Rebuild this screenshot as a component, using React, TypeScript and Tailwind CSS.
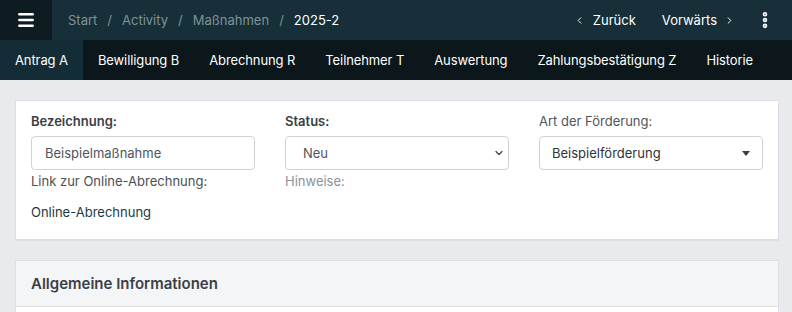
import React from 'react'
import { ChevronDown, ChevronLeft, ChevronRight, EllipsisVertical, Menu } from 'lucide-react'

const tabs = ['Antrag A', 'Bewilligung B', 'Abrechnung R', 'Teilnehmer T', 'Auswertung', 'Zahlungsbestätigung Z', 'Historie']
const crumbs = ['Start', 'Activity', 'Maßnahmen']

export default function App() {
  return (
    <div className="min-h-screen bg-[#e9eaee] font-['Inter',sans-serif] text-[13px] leading-[18px]">
      {/* top bar */}
      <div className="flex h-10 items-center bg-[#162f38] text-white">
        <button className="flex h-10 w-[52px] items-center justify-center bg-[#0e1c21]">
          <Menu size={20} strokeWidth={3} />
        </button>
        <nav className="ml-4 flex items-center gap-[10px]">
          {crumbs.map((crumb) => (
            <React.Fragment key={crumb}>
              <span className="text-[#7f9298]">{crumb}</span>
              <span className="text-[#7f9298]">/</span>
            </React.Fragment>
          ))}
          <span className="text-white">2025-2</span>
        </nav>
        <div className="ml-auto flex items-center">
          <button className="flex items-center gap-[8px] pl-3 pr-[13px]">
            <ChevronLeft size={11} strokeWidth={2} /> Zurück
          </button>
          <button className="flex items-center gap-[7px] pl-[13px] pr-[3px]">
            Vorwärts <ChevronRight size={11} strokeWidth={2} />
          </button>
          <button className="flex w-[54px] items-center justify-center">
            <EllipsisVertical size={20} strokeWidth={3.5} />
          </button>
        </div>
      </div>

      {/* tabs */}
      <div className="flex h-10 items-stretch bg-[#0b171b] text-white tracking-[-0.1px]">
        {tabs.map((tab, index) => (
          <div key={tab} className={`flex items-center px-[15px] ${index === 0 ? 'bg-[#132c35]' : ''}`}>
            {tab}
          </div>
        ))}
      </div>

      <div className="flex flex-col gap-5 pl-[15px] pr-[13px] pt-5">
        <div className="border border-[#dedfe3] bg-white px-[15px] pt-[11px] pb-[18px] shadow-[0_1px_1px_rgba(0,0,0,0.04)]">
          <div className="grid grid-cols-3 gap-x-[30px]">
            <div>
              <div className="mb-[6px] font-semibold text-[#3b3f45]">Bezeichnung:</div>
              <div className="flex h-[34px] items-center rounded border border-[#cfd3d8] px-[13px] text-[#50555b]">
                Beispielmaßnahme
              </div>
              <div className="mt-[2px] text-[#4a4f55]">Link zur Online-Abrechnung:</div>
              <div className="mt-[13px] text-[#1b3a43]">Online-Abrechnung</div>
            </div>
            <div>
              <div className="mb-[6px] font-semibold text-[#3b3f45]">Status:</div>
              <div className="flex h-[34px] items-center justify-between rounded border border-[#cfd3d8] pl-[17px] pr-[3px] text-[#50555b]">
                Neu
                <ChevronDown size={12} strokeWidth={2.5} className="text-[#44484d]" />
              </div>
              <div className="mt-[2px] text-[#8a929c]">Hinweise:</div>
            </div>
            <div>
              <div className="mb-[6px] text-[#50555b]">Art der Förderung:</div>
              <div className="flex h-[34px] items-center justify-between rounded border border-[#cfd3d8] pl-3 pr-3 text-[#2f3338]">
                Beispielförderung
                <span className="h-0 w-0 border-x-4 border-t-[5px] border-x-transparent border-t-[#3a3e43]" />
              </div>
            </div>
          </div>
        </div>

        <div className="border border-[#dedfe3] bg-white">
          <div className="flex h-[46px] items-center border-b border-[#dedfe3] bg-[#f4f5f7] px-[15px] text-[15px] font-semibold text-[#3b3f45]">
            Allgemeine Informationen
          </div>
          <div className="h-10" />
        </div>
      </div>
    </div>
  )
}
